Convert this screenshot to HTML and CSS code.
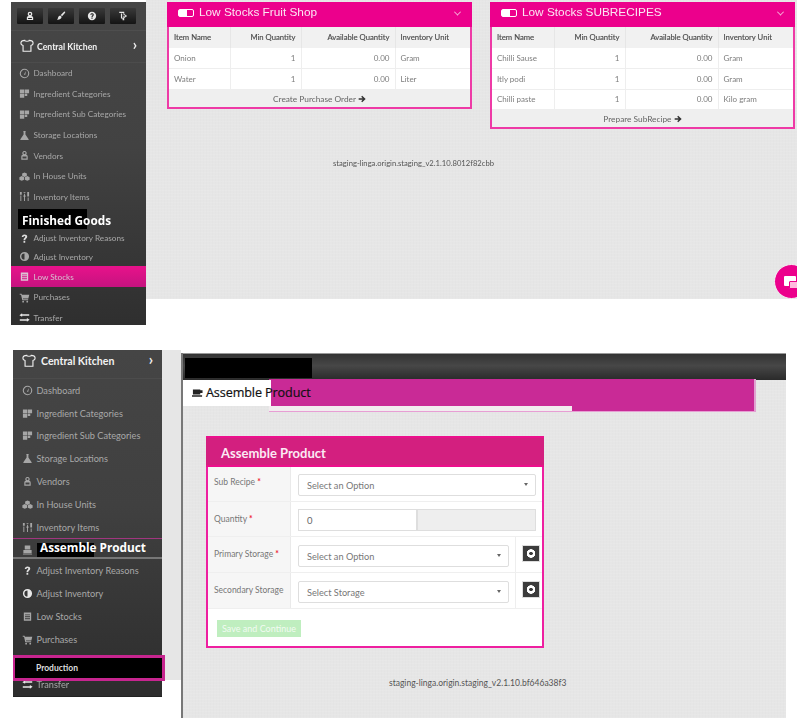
FILE: index.html
```html
<!DOCTYPE html>
<html lang="en">
<head>
<meta charset="utf-8">
<title>Low Stocks and Assemble Product</title>
<link rel="stylesheet" href="styles.css">
</head>
<body>
<svg class="defs" width="0" height="0" aria-hidden="true">
  <symbol id="i-user" viewBox="0 0 12 12"><path d="M6 .8a2.8 2.8 0 0 1 2.8 2.8c0 1-.5 1.8-1.1 2.3.9.3 2.1.8 2.1 1.9v3.1H2.2V7.800c0-1.100 1.200-1.600 2.100-1.900C3.700 5.400 3.200 4.600 3.200 3.600A2.800 2.800 0 0 1 6 .8zm0 1.500a1.300 1.300 0 1 0 0 2.600 1.300 1.300 0 0 0 0-2.600zM3.700 8.500v1h4.600v-1z" fill-rule="evenodd"/></symbol>
  <symbol id="i-brush" viewBox="0 0 12 12"><path d="M10.800.9c.5.5.2 1.300-.4 1.900L7.300 6.300 5.700 4.700 9 1.500c.6-.6 1.300-1.100 1.800-.6zM5.100 5.300l1.600 1.600c-.1 2-1.600 3.700-5.500 3.600 1.200-.8 1-2 1.500-3.200.4-1 1.300-1.700 2.400-2z"/></symbol>
  <symbol id="i-help" viewBox="0 0 12 12"><path d="M6 1a5 5 0 1 1 0 10A5 5 0 0 1 6 1zm-.7 6.900v1.400h1.400V7.900zM6 2.800c-1.200 0-2 .7-2.100 1.800h1.300c.1-.4.400-.7.800-.7s.8.300.8.700c0 .8-1.400.9-1.400 2.500h1.300c0-1.100 1.500-1.200 1.500-2.700C7.900 3.400 7.100 2.800 6 2.800z" fill-rule="evenodd"/></symbol>
  <symbol id="i-out" viewBox="0 0 12 12"><path d="M1.500 1h6v2.500L11 6 7.500 8.500V11H5.500V9H3.500V3H5V8h1.500V5.800h1V6.800L9 6 7 4.500H6.500V2.500H1.500z"/></symbol>
  <symbol id="i-shirt" viewBox="0 0 16 16"><path d="M5.500 1.500 C3.500 1.500 1.200 2.500 1 4.500 c-.1 1.700 1.200 2.600 2.500 3 V14 h9 V7.500 c1.300-.4 2.600-1.300 2.500-3 C14.800 2.500 12.500 1.500 10.500 1.500 C10 3 6 3 5.500 1.500z" fill="none" stroke="currentColor" stroke-width="1.300"/></symbol>
  <symbol id="i-gauge" viewBox="0 0 12 12"><circle cx="6" cy="6" r="4.600" fill="none" stroke="currentColor" stroke-width="1.200"/><path d="M5.300 7.200 7.700 3.200 6.700 7.500z"/></symbol>
  <symbol id="i-grid" viewBox="0 0 12 12"><path d="M1 1.500h4.700v4.200H1zM6.300 1.500H11v4.200H6.300zM1 6.300h4.700v4.200H1zM6.300 6.300H9v2.500H6.300z"/></symbol>
  <symbol id="i-flask" viewBox="0 0 12 12"><path d="M4.700 1h2.600v1H7v3l3.500 5v1h-9v-1L5 5V2h-.3z"/></symbol>
  <symbol id="i-vendor" viewBox="0 0 12 12"><path d="M6 1a2.400 2.400 0 0 1 1.800 4c1 .5 1.700 1.200 1.700 2.300v3.200h-7V7.300c0-1.100.7-1.800 1.700-2.300A2.400 2.400 0 0 1 6 1zm0 1.200a1.200 1.200 0 1 0 0 2.400 1.200 1.200 0 0 0 0-2.400zM3.800 7.200v2.100h4.400V7.200z" fill-rule="evenodd"/></symbol>
  <symbol id="i-cubes" viewBox="0 0 14 12"><path d="M7 .8 10 2.300 V5L7 6.500 4 5V2.300zM3.500 5.500l3 1.500v3l-3 1.500-3-1.500V7zM10.500 5.500l3 1.500v3l-3 1.500-3-1.500V7z"/></symbol>
  <symbol id="i-sliders" viewBox="0 0 12 12"><path d="M1 1h2v3H1zM1.500 5h1v6h-1zM5 1h2v1H5zM5.500 3h1v8h-1zM5 4.500h2v2H5zM9 1h2v5H9zM9.500 7h1v4h-1z"/></symbol>
  <symbol id="i-q" viewBox="0 0 12 12"><path d="M6 1.500c1.700 0 3 .9 3 2.600 0 2-2.200 2.200-2.200 3.700H4.900c0-2.300 2-2.600 2-3.600 0-.5-.4-.9-1-.9-.5 0-1 .4-1.100 1H3C3.100 2.600 4.300 1.500 6 1.500zM4.900 8.700h1.900v1.900H4.900z"/></symbol>
  <symbol id="i-adjust" viewBox="0 0 12 12"><path d="M6 1a5 5 0 1 1 0 10A5 5 0 0 1 6 1zm0 1.600a3.400 3.400 0 0 0 0 6.800z" fill-rule="evenodd"/></symbol>
  <symbol id="i-db" viewBox="0 0 12 12"><path d="M2 1.500h8v9H2zM3.300 3.700v1h5.400v-1zM3.300 5.800v1h5.400v-1zM3.300 7.900v1h5.400v-1z" fill-rule="evenodd"/></symbol>
  <symbol id="i-cart" viewBox="0 0 12 12"><path d="M.8 2h2l.4 1h8l-1 4H4.300l.2 1H10v1H3.600L2.200 3H.8zM4.500 9.500a1 1 0 1 1 0 2 1 1 0 0 1 0-2zM9 9.500a1 1 0 1 1 0 2 1 1 0 0 1 0-2z"/></symbol>
  <symbol id="i-transfer" viewBox="0 0 14 12"><path d="M4 .5v1.500h9v1.800H4v1.400L.5 3zM10 6.500 13.500 9 10 11.500V10H1V8.200h9z"/></symbol>
  <symbol id="i-arrow" viewBox="0 0 12 12"><path d="M6.300 1 11.500 6 6.300 11 4.800 9.500 7 7.300H1V4.700h6L4.800 2.500z"/></symbol>
  <symbol id="i-printer" viewBox="0 0 12 12"><path d="M3 1.500h6V6H3zM1.500 6.500h9V10h-9zM1 10.500h10v1H1z"/></symbol>
  <symbol id="i-mug" viewBox="0 0 14 12"><path d="M2 1.500h8v5.500H2zM10 2.500h2.500v3H10zM1 8h11v1.500H1z"/></symbol>
</svg>

<div class="screen screen-top">
  <nav class="side side-top">
    <div class="tools">
      <span class="tool"><svg class="ic"><use href="#i-user"/></svg></span>
      <span class="tool"><svg class="ic"><use href="#i-brush"/></svg></span>
      <span class="tool"><svg class="ic"><use href="#i-help"/></svg></span>
      <span class="tool"><svg class="ic"><use href="#i-out"/></svg></span>
    </div>
    <div class="brand"><svg class="ic-brand"><use href="#i-shirt"/></svg><b>Central Kitchen</b><span class="gt">&#8250;</span></div>
    <a class="item"><svg class="ic"><use href="#i-gauge"/></svg>Dashboard</a>
    <a class="item"><svg class="ic"><use href="#i-grid"/></svg>Ingredient Categories</a>
    <a class="item"><svg class="ic"><use href="#i-grid"/></svg>Ingredient Sub Categories</a>
    <a class="item"><svg class="ic"><use href="#i-flask"/></svg>Storage Locations</a>
    <a class="item"><svg class="ic"><use href="#i-vendor"/></svg>Vendors</a>
    <a class="item"><svg class="ic"><use href="#i-cubes"/></svg>In House Units</a>
    <a class="item"><svg class="ic"><use href="#i-sliders"/></svg>Inventory Items</a>
    <div class="section"><span class="mask"></span><span class="section-text">Finished Goods</span></div>
    <a class="item item-short"><svg class="ic ic-s"><use href="#i-q"/></svg>Adjust Inventory Reasons</a>
    <a class="item item-short"><svg class="ic"><use href="#i-adjust"/></svg>Adjust Inventory</a>
    <a class="item item-active"><svg class="ic"><use href="#i-db"/></svg>Low Stocks</a>
    <a class="item"><svg class="ic"><use href="#i-cart"/></svg>Purchases</a>
    <a class="item item-last"><svg class="ic ic-w"><use href="#i-transfer"/></svg>Transfer</a>
  </nav>
  <main class="main-top">
    <div class="panels">
      <section class="panel">
        <header class="panel-head"><span class="battery"></span><h2>Low Stocks Fruit Shop</h2><span class="caret"></span></header>
        <table class="stock stock-a">
          <thead><tr><th>Item Name</th><th class="num">Min Quantity</th><th class="num">Available Quantity</th><th>Inventory Unit</th></tr></thead>
          <tbody>
            <tr><td>Onion</td><td class="num">1</td><td class="num">0.00</td><td>Gram</td></tr>
            <tr><td>Water</td><td class="num">1</td><td class="num">0.00</td><td>Liter</td></tr>
          </tbody>
        </table>
        <div class="panel-foot">Create Purchase Order <svg class="arrow"><use href="#i-arrow"/></svg></div>
      </section>
      <section class="panel">
        <header class="panel-head"><span class="battery"></span><h2>Low Stocks SUBRECIPES</h2><span class="caret"></span></header>
        <table class="stock stock-b">
          <thead><tr><th>Item Name</th><th class="num">Min Quantity</th><th class="num">Available Quantity</th><th>Inventory Unit</th></tr></thead>
          <tbody>
            <tr><td>Chilli Sause</td><td class="num">1</td><td class="num">0.00</td><td>Gram</td></tr>
            <tr><td>Itly podi</td><td class="num">1</td><td class="num">0.00</td><td>Gram</td></tr>
            <tr><td>Chilli paste</td><td class="num">1</td><td class="num">0.00</td><td>Kilo gram</td></tr>
          </tbody>
        </table>
        <div class="panel-foot">Prepare SubRecipe <svg class="arrow"><use href="#i-arrow"/></svg></div>
      </section>
    </div>
    <p class="version version-top">staging-linga.origin.staging_v2.1.10.8012f82cbb</p>
    <div class="chat"><span class="bubble bubble-a"></span><span class="bubble bubble-b"></span></div>
  </main>
</div>

<div class="screen screen-bottom">
  <nav class="side side-bottom">
    <div class="brand"><svg class="ic-brand"><use href="#i-shirt"/></svg><b>Central Kitchen</b><span class="gt">&#8250;</span></div>
    <a class="item"><svg class="ic"><use href="#i-gauge"/></svg>Dashboard</a>
    <a class="item"><svg class="ic"><use href="#i-grid"/></svg>Ingredient Categories</a>
    <a class="item"><svg class="ic"><use href="#i-grid"/></svg>Ingredient Sub Categories</a>
    <a class="item"><svg class="ic"><use href="#i-flask"/></svg>Storage Locations</a>
    <a class="item"><svg class="ic"><use href="#i-vendor"/></svg>Vendors</a>
    <a class="item"><svg class="ic"><use href="#i-cubes"/></svg>In House Units</a>
    <a class="item"><svg class="ic"><use href="#i-sliders"/></svg>Inventory Items</a>
    <div class="section section-b"><svg class="ic"><use href="#i-printer"/></svg><span class="mask"></span><span class="section-text">Assemble Product</span></div>
    <a class="item"><svg class="ic ic-s"><use href="#i-q"/></svg>Adjust Inventory Reasons</a>
    <a class="item"><svg class="ic ic-w"><use href="#i-adjust"/></svg>Adjust Inventory</a>
    <a class="item"><svg class="ic"><use href="#i-db"/></svg>Low Stocks</a>
    <a class="item"><svg class="ic"><use href="#i-cart"/></svg>Purchases</a>
    <a class="item item-transfer"><svg class="ic ic-w"><use href="#i-transfer"/></svg>Transfer</a>
    <div class="production">Production</div>
  </nav>
  <div class="gutter"></div>
  <main class="main-bottom">
    <div class="topbar"><span class="topmask"></span></div>
    <div class="crumb"><svg class="crumb-ic"><use href="#i-mug"/></svg><span class="crumb-text">Assemble Product</span></div>
    <div class="strip"><span class="strip-light"></span></div>
    <section class="form">
      <header class="form-head">Assemble Product</header>
      <div class="frow frow-a"><label>Sub Recipe <i>*</i></label><div class="fields"><div class="select">Select an Option<span class="tri"></span></div></div></div>
      <div class="frow frow-a"><label>Quantity <i>*</i></label><div class="fields fields-qty"><div class="input">0</div><div class="addon"></div></div></div>
      <div class="frow frow-b"><label>Primary Storage <i>*</i></label><div class="fields"><div class="select">Select an Option<span class="tri"></span></div></div><div class="plus-cell"><span class="plus"></span></div></div>
      <div class="frow frow-b"><label>Secondary Storage</label><div class="fields"><div class="select">Select Storage<span class="tri"></span></div></div><div class="plus-cell"><span class="plus"></span></div></div>
      <div class="form-foot"><span class="save">Save and Continue</span></div>
    </section>
    <p class="version version-bottom">staging-linga.origin.staging_v2.1.10.bf646a38f3</p>
  </main>
</div>
</body>
</html>
```

FILE: styles.css
```css
* { box-sizing: border-box; }
html, body { margin: 0; padding: 0; background: #fff; }
body { width: 804px; height: 718px; overflow: hidden; position: relative; font-family: Lato, "Open Sans", sans-serif; color: #666; }
.defs { position: absolute; }
.screen { position: absolute; display: flex; align-items: flex-start; filter: blur(.35px); }
.screen-top { left: 11px; top: 0; width: 786px; height: 325px; }
.screen-bottom { left: 13px; top: 350px; width: 773px; height: 368px; }

/* sidebar */
.side { flex: none; display: flex; flex-direction: column; color: #a8a8a8; }
.side-top { width: 135px; height: 323px; margin-top: 2px; font-size: 8.200px; overflow: hidden; background: linear-gradient(#464646, #424242 45%, #2f2f2f); }
.side-bottom { position: relative; width: 149px; height: 347px; font-size: 9.200px; background: linear-gradient(#454545, #404040 45%, #2d2d2d); border-bottom: 1px solid #222; }
.tools { height: 29px; flex: none; padding: 6px 6px 0; display: flex; gap: 5px; border-bottom: 1px solid #4e4e4e; }
.tool { width: 26px; height: 16px; display: flex; align-items: center; justify-content: center; background: linear-gradient(#3a3a3a, #141414); border-radius: 1px; color: #e6e6e6; }
.tool .ic { margin: 0; width: 10px; height: 10px; }
.brand { flex: none; display: flex; align-items: center; height: 32px; padding: 0 9px 1px; color: #f2f2f2; border-bottom: 1px solid #4c4c4c; font-size: 8.700px; }
.side-bottom .brand { height: 29px; padding: 0 9px 6px; font-size: 10.600px; }
.brand b { flex: 1; margin-left: 3px; }
.side-bottom .brand b { margin-left: 5px; }
.ic-brand { width: 14px; height: 14px; color: #eee; flex: none; }
.gt { font-size: 15px; font-weight: 700; color: #eee; line-height: 1; margin-top: -3px; }
.item { flex: none; display: flex; align-items: center; height: 20.600px; padding-left: 8px; white-space: nowrap; }
.side-bottom .item { height: 22.800px; padding-left: 9px; }
.ic { flex: none; width: 11px; height: 11px; margin-right: 3.500px; fill: #a6a6a6; color: #a6a6a6; }
.tool .ic { fill: #e6e6e6; color: #e6e6e6; }
.ic-s { fill: #ddd; }
.ic-w { fill: #e8e8e8; }
.item-short { height: 18.500px; }
.item-active { height: 21px; background: linear-gradient(#e8128b, #c5137f); color: #d8c0d0; }
.item-active .ic { fill: #dcc5d5; }
.side-top .item-last { height: 20px; }
.section { flex: none; position: relative; height: 22px; }
.section .mask { position: absolute; left: 7px; top: 2px; width: 69px; height: 20px; background: #000; }
.section-text { position: absolute; left: 11px; top: 4px; font: 700 11.800px/18px "Open Sans", sans-serif; color: #fff; white-space: nowrap; }
.section-b { height: 21px; margin-top: -1px; margin-bottom: 1px; padding: 5px 0 0 9px; border-top: 1px solid #a0367f; border-bottom: 2px solid #777; }
.section-b .mask { left: 24px; top: 4px; width: 57px; height: 14px; }
.section-b .section-text { left: 27px; top: -1px; line-height: 19px; }
.side-bottom .item-transfer { position: absolute; left: 0; right: 0; bottom: 0; height: 23px; }
.production { position: absolute; left: 0; top: 305px; width: 152px; height: 26px; padding-left: 21px; background: #000; border: 3px solid #c7258f; border-left-width: 2px; color: #ddd; font-weight: 700; font-size: 8.500px; line-height: 20px; }
.gutter { flex: none; width: 19px; height: 330px; background: #e6e6e6; }

/* texture */
.main-top, .main-bottom { background-color: #e6e6e6; background-image: repeating-linear-gradient(0deg, rgba(255,255,255,.07) 0 1px, transparent 1px 3px), repeating-linear-gradient(90deg, rgba(0,0,0,.008) 0 1px, transparent 1px 3px); }

/* top main */
.main-top { position: relative; flex: none; width: 651px; height: 299px; overflow: hidden; padding: 2px 0 0 21px; }
.panels { display: flex; align-items: flex-start; gap: 18px; }
.panel { width: 305px; flex: none; border: 2px solid #ee3aa6; border-top: none; background: #fff; }
.panel-head { height: 25px; margin: 0 -2px; padding: 0 12px 3px 11px; display: flex; align-items: center; background: #ec008c; color: #fbdcef; }
.panel-head h2 { flex: 1; margin: 0 0 0 5px; font: 400 11.800px/1 "Liberation Sans", sans-serif; color: #fbe6f3; }
.battery { width: 16px; height: 8px; border-radius: 2px; border: 1.500px solid #fff; background: linear-gradient(90deg, #fff 55%, transparent 55%); }
.caret { width: 5px; height: 5px; border: solid #f6b3da; border-width: 0 1px 1px 0; transform: rotate(45deg) translate(-1px,-1px); }
.stock { width: 100%; border-collapse: collapse; table-layout: fixed; font-size: 8px; color: #7d7d7d; }
.stock th { height: 21px; background: #f1f1f1; color: #4b4b4b; font-size: 7.700px; font-weight: 400; text-align: left; padding: 0 5px 1px; border-right: 1px solid #e6e6e6; -webkit-text-stroke: .15px #4b4b4b; }
.stock td { height: 20.500px; padding: 0 5px; border-right: 1px solid #eee; border-bottom: 1px solid #eee; }
.stock th:last-child, .stock td:last-child { border-right: none; }
.stock .num { text-align: right; }
.stock-a th:nth-child(1) { width: 61px; } .stock-a th:nth-child(2) { width: 71px; } .stock-a th:nth-child(3) { width: 94px; }
.stock-b th:nth-child(1) { width: 62px; } .stock-b th:nth-child(2) { width: 71px; } .stock-b th:nth-child(3) { width: 93px; }
.panel-foot { height: 17px; background: #efefef; text-align: center; font-size: 8.300px; line-height: 18px; color: #666; }
.arrow { width: 8px; height: 8px; vertical-align: -1px; fill: #333; }
.version { margin: 0; color: #555; white-space: nowrap; }
.version-top { margin: 29px 0 0 166px; font-size: 7.650px; }
.chat { position: absolute; left: 628px; top: 264px; width: 35px; height: 35px; border-radius: 50%; background: #ec008c; border: 1px solid #f2f2f2; }
.bubble { position: absolute; background: #fff; border-radius: 1px; }
.bubble-a { left: 9px; top: 11px; width: 12px; height: 10px; }
.bubble-b { left: 14px; top: 16px; width: 13px; height: 8px; border: 1px solid #ec008c; background: #fbd; }

/* bottom main */
.main-bottom { position: relative; flex: none; width: 605px; height: 365px; margin-top: 3px; border-left: 2px solid #777; }
.topbar { height: 27px; padding: 4px 0 0 2px; background: linear-gradient(#333, #474747 45%, #2a2a2a); border-top: 1px solid #999; }
.topmask { display: block; width: 127px; height: 20px; background: #000; }
.crumb { position: relative; z-index: 2; height: 26px; width: 88px; padding-left: 8px; background: #fff; display: flex; align-items: center; white-space: nowrap; }
.crumb-ic { width: 13px; height: 11px; fill: #222; flex: none; margin-right: 2px; }
.crumb-text { font: 400 12.600px/1 "Open Sans", sans-serif; color: #111; letter-spacing: -.1px; -webkit-text-stroke: .2px #111; }
.strip { position: absolute; left: 86px; top: 26px; width: 487px; height: 33px; background: #c92a96; border-bottom: 1px solid #e79ed4; border-right: 2px solid #e0a0d0; }
.strip-light { position: absolute; left: 0; bottom: 0; width: 303px; height: 5px; background: #f2ecef; }
.form { width: 338px; height: 212px; margin: 30px 0 0 23px; background: #fff; border: 2px solid #ee1fa0; border-top: none; position: relative; z-index: 1; }
.form-head { height: 31px; margin: 0 -2px; padding-left: 15px; background: linear-gradient(#ec0f8c 2px, #d31f7f 2px, #d31f7f 29px, #ec0f8c 29px); color: #fbeaf4; font-weight: 700; font-size: 13px; line-height: 34px; }
.frow { display: grid; grid-template-columns: 83px 1fr; border-bottom: 1px solid #efefef; }
.frow-a { height: 35px; }
.frow-b { height: 36px; grid-template-columns: 83px 224px 1fr; }
.frow label { background: #f6f6f6; border-right: 1px solid #eaeaea; padding: 12px 0 0 6px; font-size: 8.500px; color: #777; white-space: nowrap; }
.frow:first-of-type label { padding-top: 10px; }
.frow i { color: #e23; font-style: normal; font-weight: 700; }
.fields { padding: 7px 6px 0 7px; }
.fields-qty { display: flex; }
.frow-b .fields { padding: 8px 6px 0 7px; }
.select { position: relative; height: 22px; padding-left: 8px; background: #fff; border: 1px solid #dedede; border-radius: 2px; font-size: 9.200px; line-height: 22px; color: #777; }
.tri { position: absolute; right: 7px; top: 8px; border: 2.500px solid transparent; border-top: 3px solid #666; border-bottom: none; }
.input { width: 119px; height: 22px; padding-left: 8px; border: 1px solid #dedede; font-size: 9.500px; line-height: 22px; color: #666; }
.addon { flex: 1; height: 22px; background: #eee; border: 1px solid #dedede; }
.plus-cell { border-left: 1px solid #eee; padding: 8px 0 0 6px; }
.plus { display: block; width: 18px; height: 17px; background: radial-gradient(circle, #3c3c3c 0 1.500px, #fff 2px 4px, #3c3c3c 4.500px); border: 1px solid #ddd; }
.form-foot { padding: 11px 0 0 9px; }
.save { display: block; height: 17px; width: 84px; background: #bfeebf; color: #f2fbf2; font-size: 9px; line-height: 17px; text-align: center; }
.version-bottom { margin: 30px 0 0 206px; font-size: 8.500px; }
```
